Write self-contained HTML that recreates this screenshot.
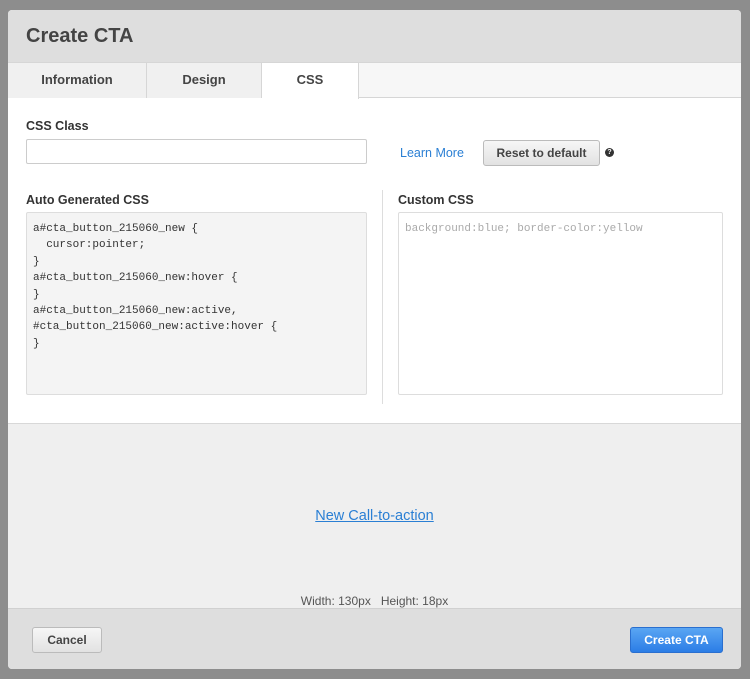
<!DOCTYPE html>
<html><head><style>
*{box-sizing:border-box;margin:0;padding:0}
body{width:750px;height:679px;background:#8d8d8d;font-family:"Liberation Sans",Arial,sans-serif;position:relative;overflow:hidden;color:#333}
.m{position:absolute;left:8px;top:10px;width:733px;height:659px;background:#fff;border-radius:4px;overflow:hidden}
.hd{position:absolute;left:0;top:0;width:100%;height:52px;background:#dedede}
.hd h1{position:absolute;left:18px;top:15px;font-size:20px;font-weight:bold;color:#444}
.tabs{position:absolute;left:0;top:52px;width:100%;height:36px;background:#f7f7f7;border-bottom:1px solid #d6d6d6;border-top:1px solid #d6d6d6}
.tab{position:absolute;top:0;height:35px;line-height:34px;text-align:center;font-size:13px;font-weight:bold;color:#444;background:#f0f0f0;border-right:1px solid #d6d6d6}
.tab.a{background:#fff;height:36px}
.lbl{position:absolute;font-size:12.5px;font-weight:bold;color:#333}
.inp{position:absolute;border:1px solid #ccc;border-radius:2px;background:#fff}
.code{position:absolute;font-family:"Liberation Mono",monospace;font-size:11px;line-height:16.4px;white-space:pre;color:#333;padding:8px 6px}
.btn{position:absolute;border:1px solid #bbb;border-radius:3px;background:linear-gradient(#f6f6f6,#e2e2e2);font-size:12px;font-weight:bold;color:#444;text-align:center}
.pv{position:absolute;left:0;top:413px;width:100%;height:185px;background:#efefef;border-top:1px solid #d8d8d8}
.ft{position:absolute;left:0;top:598px;width:100%;height:61px;background:#dedede;border-top:1px solid #d0d0d0}
</style></head><body>
<div class="m">
<div class="hd"><h1>Create CTA</h1></div>
<div class="tabs">
<div class="tab" style="left:0;width:139px">Information</div>
<div class="tab" style="left:139px;width:115px">Design</div>
<div class="tab a" style="left:254px;width:97px">CSS</div>
</div>
<div class="lbl" style="left:18px;top:109px">CSS Class</div>
<div class="inp" style="left:18px;top:129px;width:341px;height:25px"></div>
<div style="position:absolute;left:392px;top:136px;font-size:12.5px;color:#2a7fd4">Learn More</div>
<div class="btn" style="left:475px;top:130px;width:117px;height:26px;line-height:24px">Reset to default</div>
<div style="position:absolute;left:597px;top:138px;width:9px;height:9px;border-radius:50%;background:#333;color:#fff;font-size:7px;font-weight:bold;text-align:center;line-height:9px">?</div>
<div class="lbl" style="left:18px;top:183px">Auto Generated CSS</div>
<div class="code" style="left:18px;top:202px;width:341px;height:183px;background:#f4f4f4;border:1px solid #ddd;border-radius:2px">a#cta_button_215060_new {
  cursor:pointer;
}
a#cta_button_215060_new:hover {
}
a#cta_button_215060_new:active,
#cta_button_215060_new:active:hover {
}</div>
<div style="position:absolute;left:374px;top:180px;width:1px;height:214px;background:#ddd"></div>
<div class="lbl" style="left:390px;top:183px">Custom CSS</div>
<div class="code" style="left:390px;top:202px;width:325px;height:183px;background:#fff;border:1px solid #ddd;border-radius:2px;color:#aaa">background:blue; border-color:yellow</div>
<div class="pv">
<div style="position:absolute;left:0;width:100%;top:84px;text-align:center;font-size:14.5px;color:#2a7fd4;text-decoration:underline">New Call-to-action</div>
<div style="position:absolute;left:0;width:100%;top:170px;text-align:center;font-size:12px;color:#555">Width: 130px&nbsp;&nbsp; Height: 18px</div>
</div>
<div class="ft">
<div class="btn" style="left:24px;top:18px;width:70px;height:26px;line-height:24px">Cancel</div>
<div class="btn" style="left:622px;top:18px;width:93px;height:26px;line-height:24px;background:linear-gradient(#5aa6f3,#2b7de6);border-color:#2a6fcf;color:#fff">Create CTA</div>
</div>
</div>
</body></html>
